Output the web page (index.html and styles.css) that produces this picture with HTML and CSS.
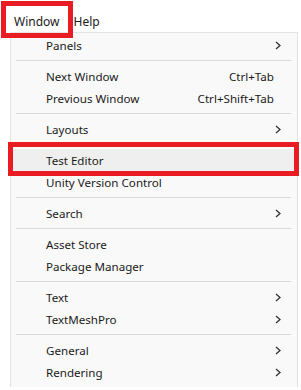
FILE: index.html
```html
<!DOCTYPE html>
<html lang="en">
<head>
    <meta charset="UTF-8">
    <title>Window Menu</title>
    <link rel="stylesheet" href="styles.css">
</head>
<body>
    <div class="menubar">
        <div class="menubar-item marked">Window</div>
        <div class="menubar-item">Help</div>
    </div>

    <div class="menu">
        <div class="item"><span class="label">Panels</span><svg class="arrow" viewBox="0 0 6 9"><polyline points="1,1 5,4.5 1,8"/></svg></div>
        <div class="sep"></div>
        <div class="item"><span class="label">Next Window</span><span class="shortcut">Ctrl+Tab</span></div>
        <div class="item"><span class="label">Previous Window</span><span class="shortcut">Ctrl+Shift+Tab</span></div>
        <div class="sep"></div>
        <div class="item"><span class="label">Layouts</span><svg class="arrow" viewBox="0 0 6 9"><polyline points="1,1 5,4.5 1,8"/></svg></div>
        <div class="sep"></div>
        <div class="item active marked"><span class="label">Test Editor</span></div>
        <div class="item"><span class="label">Unity Version Control</span></div>
        <div class="sep"></div>
        <div class="item"><span class="label">Search</span><svg class="arrow" viewBox="0 0 6 9"><polyline points="1,1 5,4.5 1,8"/></svg></div>
        <div class="sep"></div>
        <div class="item"><span class="label">Asset Store</span></div>
        <div class="item"><span class="label">Package Manager</span></div>
        <div class="sep"></div>
        <div class="item"><span class="label">Text</span><svg class="arrow" viewBox="0 0 6 9"><polyline points="1,1 5,4.5 1,8"/></svg></div>
        <div class="item"><span class="label">TextMeshPro</span><svg class="arrow" viewBox="0 0 6 9"><polyline points="1,1 5,4.5 1,8"/></svg></div>
        <div class="sep"></div>
        <div class="item"><span class="label">General</span><svg class="arrow" viewBox="0 0 6 9"><polyline points="1,1 5,4.5 1,8"/></svg></div>
        <div class="item"><span class="label">Rendering</span><svg class="arrow" viewBox="0 0 6 9"><polyline points="1,1 5,4.5 1,8"/></svg></div>
    </div>
</body>
</html>
```

FILE: styles.css
```css
body {
    margin: 0;
    background-color: #fff;
    font-family: "Noto Sans", "Noto Sans CJK KR", sans-serif;
    font-size: 11.6px;
    color: #1a1a1a;
}

.menubar {
    display: flex;
    height: 32px;
    padding-left: 7px;
    box-sizing: border-box;
    font-size: 12px;
}

.menubar-item {
    position: relative;
    padding: 0 7px;
    margin-top: 12px;
    height: 20px;
    line-height: 20px;
}

/* red annotation boxes drawn over the screenshot */
.marked::after {
    content: "";
    position: absolute;
    border: 5px solid #e81c22;
    pointer-events: none;
}

.menubar-item.marked::after {
    left: -6px;
    right: -6px;
    top: -11px;
    bottom: -6px;
}

.menu {
    margin-left: 10px;
    width: 288px;
    height: 355px;
    box-sizing: border-box;
    padding-top: 1px;
    background-color: #f9f9f9;
    border: 1px solid #e4e4e4;
    border-bottom: none;
}

.item {
    position: relative;
    display: flex;
    align-items: center;
    height: 22px;
    padding: 0 16px 0 35px;
}

.label {
    flex: 1;
}

.shortcut {
    margin-right: 7px;
}

.arrow {
    width: 6px;
    height: 9px;
    fill: none;
    stroke: #333;
    stroke-width: 1.3;
}

.item.active {
    margin: 0 2px;
    padding-left: 33px;
    background-color: #efefef;
    border-radius: 4px;
}

.item.marked::after {
    left: -5px;
    right: -4px;
    top: -7px;
    bottom: -5px;
}

.sep {
    height: 9px;
    display: flex;
    align-items: center;
    padding: 0 6px 0 5px;
}

.sep::before {
    content: "";
    flex: 1;
    border-top: 1px solid #d9d9d9;
}
```
